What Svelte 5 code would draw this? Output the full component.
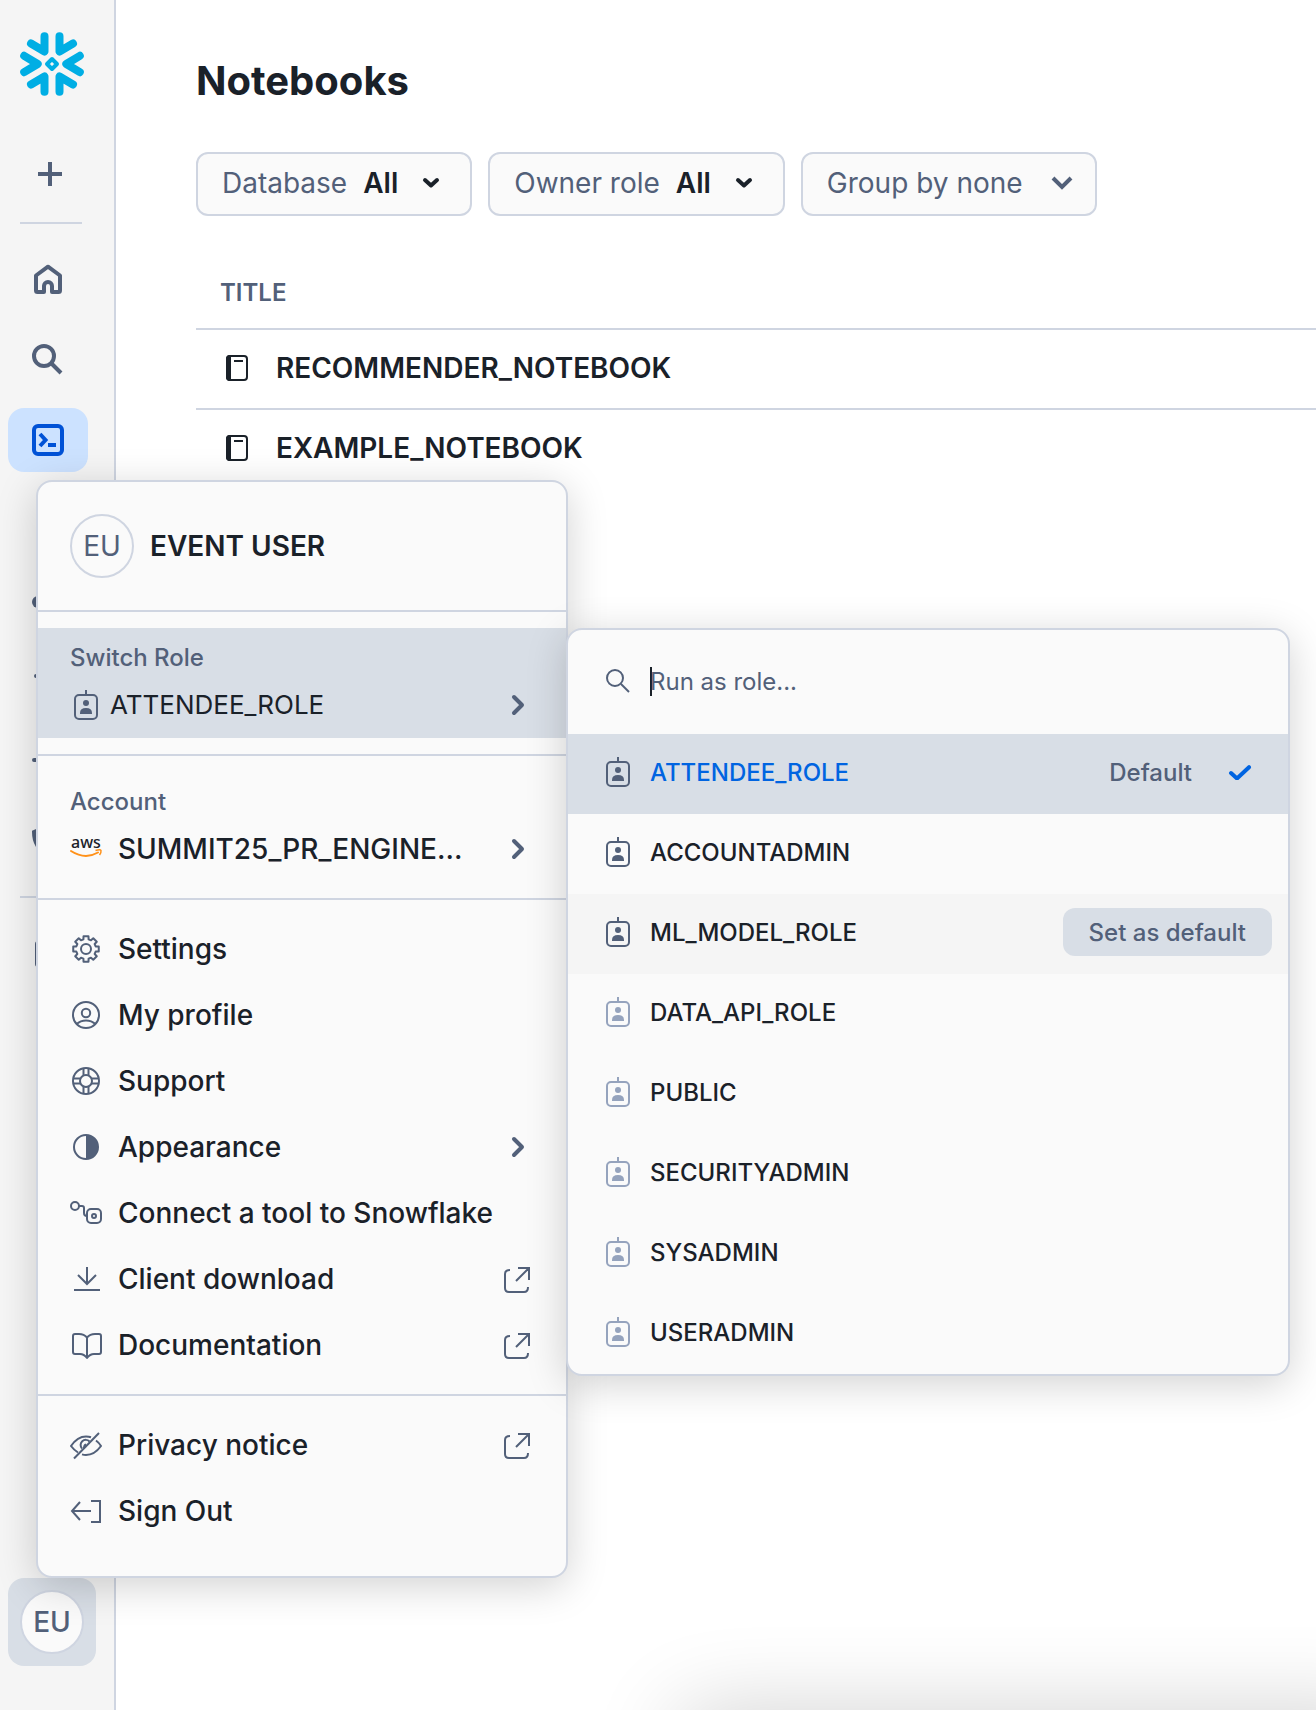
<script>
  const notebooks = ["RECOMMENDER_NOTEBOOK", "EXAMPLE_NOTEBOOK"];

  const roles = [
    { name: "ATTENDEE_ROLE", assigned: true },
    { name: "ACCOUNTADMIN", assigned: true },
    { name: "ML_MODEL_ROLE", assigned: true },
    { name: "DATA_API_ROLE", assigned: false },
    { name: "PUBLIC", assigned: false },
    { name: "SECURITYADMIN", assigned: false },
    { name: "SYSADMIN", assigned: false },
    { name: "USERADMIN", assigned: false },
  ];

  const menuItems = [
    { label: "Settings", icon: "settings" },
    { label: "My profile", icon: "profile" },
    { label: "Support", icon: "support" },
    { label: "Appearance", icon: "appearance", trailing: "chevron" },
    { label: "Connect a tool to Snowflake", icon: "connect" },
    { label: "Client download", icon: "download", trailing: "external" },
    { label: "Documentation", icon: "book", trailing: "external" },
  ];

  const footerItems = [
    { label: "Privacy notice", icon: "privacy", trailing: "external" },
    { label: "Sign Out", icon: "signout" },
  ];

  const navItems = ["home", "search", "projects", "data", "products", "monitoring", "transform", "admin"];

  let currentRole = $state("ATTENDEE_ROLE");
  let defaultRole = $state("ATTENDEE_ROLE");
  let hoveredRole = $state("ML_MODEL_ROLE");
  let query = $state("");
  let grouping = $state("none");

  let visibleRoles = $derived(
    roles.filter((role) => role.name.includes(query.toUpperCase()))
  );

  // eight-tooth gear outline around 16,16
  function gearPath() {
    let points = [];
    for (let i = 0; i < 8; i++) {
      const steps = [[-15, 10], [-11, 13], [11, 13], [15, 10]];
      for (const [offset, radius] of steps) {
        const a = ((i * 45 + offset) * Math.PI) / 180;
        const x = 16 + radius * Math.cos(a);
        const y = 16 + radius * Math.sin(a);
        points.push(x.toFixed(2) + " " + y.toFixed(2));
      }
    }
    return "M" + points.join("L") + "Z";
  }
</script>

{#snippet badge()}
  <svg class="badge" width="24" height="30" viewBox="0 0 24 30" aria-hidden="true">
    <rect x="1" y="5" width="22" height="24" rx="4" fill="none" stroke="currentColor" stroke-width="2" />
    <path d="M12 0v5" stroke="currentColor" stroke-width="2" />
    <circle cx="12" cy="13" r="3" fill="currentColor" />
    <path d="M6 24v-1q0-5 6-5t6 5v1z" fill="currentColor" />
  </svg>
{/snippet}

{#snippet navIcon(name)}
  <svg width="32" height="32" viewBox="0 0 32 32" fill="none" stroke="currentColor" stroke-width="4" aria-hidden="true">
    {#if name === "home"}
      <path d="M4 11.5 16 2.7l12 8.8v15q0 1.5-1.5 1.5H20v-6a4 4 0 0 0-8 0v6H5.5Q4 28 4 26.5z" stroke-linejoin="round" />
    {:else if name === "search"}
      <circle cx="12" cy="12" r="10" />
      <path d="M19 19 29 29" />
    {:else if name === "projects"}
      <rect x="2" y="2" width="28" height="28" rx="4" />
      <path d="m8 10 5.5 6L8 22M16 21h8" />
    {:else if name === "data"}
      <ellipse cx="16" cy="8" rx="9" ry="4" />
      <path d="M7 8v16c0 6 18 6 18 0V8" />
    {:else if name === "products"}
      <circle cx="6" cy="18" r="6" fill="currentColor" stroke="none" />
      <circle cx="24" cy="8" r="4" />
      <path d="m8 16 14-7" />
    {:else if name === "monitoring"}
      <path d="M4 12h5l5-8 6 22 5-14h5" stroke-linecap="round" />
    {:else if name === "transform"}
      <path d="M2 16h8l5-11 5 21 4-10h6" stroke-linecap="round" />
    {:else if name === "admin"}
      <path d="M2 8 16 2l14 6q0 16-14 22Q2 24 2 8z" />
    {:else}
      <rect x="4" y="4" width="24" height="24" rx="2" stroke-width="2" />
    {/if}
  </svg>
{/snippet}

{#snippet menuIcon(name)}
  <svg width="32" height="32" viewBox="0 0 32 32" fill="none" stroke="currentColor" stroke-width="2" aria-hidden="true">
    {#if name === "settings"}
      <path d={gearPath()} stroke-linejoin="round" />
      <circle cx="16" cy="16" r="5" />
    {:else if name === "profile"}
      <circle cx="16" cy="16" r="13" />
      <circle cx="16" cy="14" r="4.2" />
      <path d="M6.5 25q4-3.6 9.5-3.6t9.5 3.6" />
    {:else if name === "support"}
      <circle cx="16" cy="16" r="13" />
      <circle cx="16" cy="16" r="6" />
      <path d="M13.5 3v7.5M18.5 3v7.5M13.5 21.5V29M18.5 21.5V29M3 13.5h7.5M3 18.5h7.5M21.5 13.5H29M21.5 18.5H29" />
    {:else if name === "appearance"}
      <circle cx="16" cy="16" r="12" />
      <path d="M16 4a12 12 0 0 1 0 24z" fill="currentColor" stroke="none" />
    {:else if name === "connect"}
      <circle cx="5" cy="9" r="4" />
      <path d="M9 9h3q2 0 2 2v5q0 3 3 3" />
      <rect x="17" y="12" width="14" height="14" rx="4" />
      <circle cx="24" cy="19" r="2" />
    {:else if name === "download"}
      <path d="M17 4v17M8 12l9 9 9-9M4 27h26" />
    {:else if name === "book"}
      <path d="M17 8.5Q14 5 9 5H5Q3 5 3 7v16q0 2 2 2h5q4 0 7 4 3-4 7-4h5q2 0 2-2V7q0-2-2-2h-4q-5 0-8 3.5V29" stroke-linejoin="round" />
    {:else if name === "privacy"}
      <path d="M21 8.3Q19 7.5 16 7.5 7.5 7.5 1 17q3 4 7 6.5M26 11.5q3 2.2 5 5.5-6.500 9-15 9-2 0-4-.6M19.5 12.5a5 5 0 0 0-7.5 7M16 15.5q-2 .5-2 4" />
      <path d="M4 29.5 29 4" />
    {:else if name === "signout"}
      <path d="M2 16h19M10 7l-8 9 8 9M21 6h9v21h-9" />
    {/if}
  </svg>
{/snippet}

{#snippet trailingIcon(name)}
  {#if name === "chevron"}
    <svg class="trailing" width="32" height="32" viewBox="0 0 32 32" fill="none" aria-hidden="true">
      <path d="m12 8 8 8-8 8" stroke="currentColor" stroke-width="4" stroke-linecap="round" stroke-linejoin="round" />
    </svg>
  {:else if name === "external"}
    <svg class="trailing" width="32" height="32" viewBox="0 0 32 32" fill="none" aria-hidden="true">
      <path d="M8 7q-5 0-5 4v14q0 4 4 4h15q4 0 4-5M16 5h11v12M27 5 14 18" stroke="currentColor" stroke-width="2" />
    </svg>
  {/if}
{/snippet}

{#snippet menuList(items)}
  <ul class="section">
    {#each items as item}
      <li>
        <a class="item" href="#{item.icon}">
          {@render menuIcon(item.icon)}
          <span>{item.label}</span>
          {@render trailingIcon(item.trailing)}
        </a>
      </li>
    {/each}
  </ul>
{/snippet}

<div class="app">
  <aside class="sidebar">
    <a class="logo" href="#top" aria-label="Snowflake">
      <svg width="64" height="64" viewBox="0 0 64 64" fill="none" stroke="#00aee4" stroke-width="8" stroke-linecap="round" stroke-linejoin="round">
        <path d="M11 11.5 24.5 19.500V4.200M53 11.5 39.5 19.500V4.200" />
        <path d="M11 52.5 24.5 44.500v15.300M53 52.5 39.5 44.500v15.300" />
        <path d="m4.200 23.800 13.500 8.200-13.500 8.200M59.800 23.800 46.300 32l13.500 8.200" />
        <path d="m32 27 5 5-5 5-5-5z" stroke-width="4" />
      </svg>
    </a>
    <button class="nav create" aria-label="Create">
      <svg width="24" height="24" viewBox="0 0 24 24" aria-hidden="true">
        <path d="M12 0v24M0 12h24" stroke="currentColor" stroke-width="4" />
      </svg>
    </button>
    <hr />
    <nav>
      {#each navItems as name}
        <a class="nav" class:active={name === "projects"} href="#{name}" aria-label={name}>
          {@render navIcon(name)}
        </a>
      {/each}
    </nav>
    <hr />
    <a class="nav" href="#catalog" aria-label="catalog">{@render navIcon("catalog")}</a>

    <div class="account">
      <button class="user" aria-label="User menu" aria-expanded="true">
        <span class="avatar small">EU</span>
      </button>

      <div class="menu">
        <div class="profile">
          <span class="avatar">EU</span>
          <strong>EVENT USER</strong>
        </div>

        <div class="section switcher">
          <button class="block selected" aria-haspopup="true" aria-expanded="true">
            <span class="label">Switch Role</span>
            <span class="value role">
              <span class="slot">{@render badge()}</span>
              <span>{currentRole}</span>
              {@render trailingIcon("chevron")}
            </span>
          </button>

          <div class="submenu">
            <div class="search">
              <svg width="24" height="24" viewBox="0 0 24 24" fill="none" stroke="currentColor" stroke-width="2" aria-hidden="true">
                <circle cx="9" cy="9" r="8" />
                <path d="M15 15 23 23" />
              </svg>
              <span class="caret"></span>
              <input type="text" placeholder="Run as role..." aria-label="Run as role" bind:value={query} />
            </div>
            <ul>
              {#each visibleRoles as role}
                <li
                  class:current={role.name === currentRole}
                  class:hovered={role.name === hoveredRole}
                  class:dim={!role.assigned}
                  onmouseenter={() => (hoveredRole = role.name)}
                >
                  <button class="pick" onclick={() => (currentRole = role.name)}>
                    {@render badge()}
                    <span>{role.name}</span>
                  </button>
                  {#if role.name === defaultRole}
                    <span class="default">Default</span>
                  {:else if role.name === hoveredRole}
                    <button class="set" onclick={() => (defaultRole = role.name)}>Set as default</button>
                  {/if}
                  {#if role.name === currentRole}
                    <svg class="check" width="24" height="16" viewBox="0 0 24 16" fill="none" aria-hidden="true">
                      <path d="m3 9 6 5.500L21 3.200" stroke="#0064e1" stroke-width="4" stroke-linecap="round" />
                    </svg>
                  {/if}
                </li>
              {/each}
            </ul>
          </div>
        </div>

        <div class="section">
          <button class="block" aria-haspopup="true">
            <span class="label">Account</span>
            <span class="value">
              <svg class="cloud" width="32" height="32" viewBox="0 0 32 32" aria-hidden="true">
                <text x="1" y="15" class="aws">aws</text>
                <path d="M1 18q14 9 27 1.500" fill="none" stroke="#ff9119" stroke-width="2" stroke-linecap="round" />
                <path d="M25.500 17.500q5-1.500 5.500 0 .400 2-1.500 4.500" fill="none" stroke="#ff9119" stroke-width="1.500" />
              </svg>
              <span>SUMMIT25_PR_ENGINE...</span>
              {@render trailingIcon("chevron")}
            </span>
          </button>
        </div>

        {@render menuList(menuItems)}
        {@render menuList(footerItems)}
      </div>
    </div>
  </aside>

  <main>
    <h1>Notebooks</h1>
    <div class="filters">
      <button class="filter">
        Database <b>All</b>
        <svg width="18" height="12" viewBox="0 0 18 12" fill="none" aria-hidden="true">
          <path d="m3 3 6 5.500L15 3" stroke="currentColor" stroke-width="4" stroke-linecap="round" stroke-linejoin="round" />
        </svg>
      </button>
      <button class="filter">
        Owner role <b>All</b>
        <svg width="18" height="12" viewBox="0 0 18 12" fill="none" aria-hidden="true">
          <path d="m3 3 6 5.500L15 3" stroke="currentColor" stroke-width="4" stroke-linecap="round" stroke-linejoin="round" />
        </svg>
      </button>
      <div class="group">
        <select class="filter" aria-label="Grouping" bind:value={grouping}>
          <option value="none">Group by none</option>
          <option value="role">Group by role</option>
        </select>
        <svg width="22" height="16" viewBox="0 0 22 16" fill="none" aria-hidden="true">
          <path d="m2 3 9 9 9-9" stroke="currentColor" stroke-width="4" />
        </svg>
      </div>
    </div>

    <table>
      <thead>
        <tr><th scope="col">TITLE</th></tr>
      </thead>
      <tbody>
        {#each notebooks as notebook}
          <tr>
            <td>
              <a href="#{notebook}">
                <svg width="22" height="26" viewBox="0 0 22 26" aria-hidden="true">
                  <rect x="1" y="1" width="20" height="24" rx="3" fill="none" stroke="currentColor" stroke-width="2" />
                  <path d="M5 0v26H4Q0 26 0 22V4Q0 0 4 0zM8 5h9v2H8z" fill="currentColor" />
                </svg>
                {notebook}
              </a>
            </td>
          </tr>
        {/each}
      </tbody>
    </table>
    <div class="glow"></div>
  </main>
</div>

<style>
  :global(body) {
    margin: 0;
    background: #fff;
  }

  .app {
    --ink: #1a2129;
    --muted: #526079;
    --line: #cfd5e1;
    --panel: #fafafa;
    --select: #d8dee6;
    display: flex;
    min-height: 100vh;
    font-family: Inter, "Liberation Sans", sans-serif;
    font-size: 28px;
    color: var(--ink);
  }

  .app * {
    box-sizing: border-box;
  }

  button,
  input,
  select {
    font: inherit;
    color: inherit;
    background: none;
    border: 0;
    padding: 0;
    margin: 0;
    text-align: left;
    cursor: pointer;
  }

  a {
    color: inherit;
    text-decoration: none;
  }

  ul {
    list-style: none;
    margin: 0;
    padding: 0;
  }

  svg {
    flex: none;
    display: block;
  }

  .sidebar {
    display: flex;
    flex-direction: column;
    flex: none;
    width: 116px;
    padding: 32px 0 44px 8px;
    border-right: 2px solid var(--line);
    background: #f5f5f5;
    color: var(--muted);
    position: relative;
    z-index: 1;
  }

  .logo {
    margin: 0 0 46px 12px;
  }

  .nav {
    display: flex;
    align-items: center;
    justify-content: center;
    width: 80px;
    height: 64px;
    border-radius: 16px;
  }

  .create {
    width: 84px;
    margin-bottom: -8px;
  }

  .nav.active {
    background: #cce2ff;
    color: #0052d6;
  }

  nav {
    display: flex;
    flex-direction: column;
    gap: 16px;
  }

  hr {
    width: 62px;
    height: 2px;
    margin: 24px 0 24px 12px;
    border: 0;
    background: var(--line);
  }

  .account {
    position: relative;
    margin-top: auto;
  }

  .user {
    display: flex;
    align-items: center;
    justify-content: center;
    width: 88px;
    height: 88px;
    border-radius: 16px;
    background: var(--select);
  }

  .avatar {
    display: flex;
    align-items: center;
    justify-content: center;
    width: 64px;
    height: 64px;
    border: 2px solid var(--line);
    border-radius: 50%;
    background: var(--panel);
    color: var(--muted);
  }

  .avatar.small {
    font-weight: 500;
  }

  .menu {
    position: absolute;
    left: 28px;
    bottom: 100%;
    width: 532px;
    padding-bottom: 16px;
    border: 2px solid var(--line);
    border-radius: 16px;
    background: var(--panel);
    color: var(--ink);
    box-shadow: 0 8px 40px rgba(0, 0, 0, 0.18);
  }

  .profile {
    display: flex;
    align-items: center;
    gap: 16px;
    padding: 32px;
  }

  .profile strong {
    font-weight: 600;
  }

  .section {
    padding: 16px 0;
    border-top: 2px solid var(--line);
  }

  .switcher {
    position: relative;
  }

  .block {
    display: flex;
    flex-direction: column;
    gap: 16px;
    width: 100%;
    padding: 16px 32px;
  }

  .selected {
    background: var(--select);
  }

  .label {
    font-size: 24px;
    line-height: 28px;
    font-weight: 500;
    color: var(--muted);
  }

  .value,
  .item {
    display: flex;
    align-items: center;
    gap: 16px;
    width: 100%;
    font-weight: 500;
  }

  .value {
    line-height: 34px;
  }

  .role {
    gap: 8px;
    font-size: 26px;
    font-weight: 400;
  }

  .slot {
    display: flex;
    justify-content: center;
    width: 32px;
  }

  .item {
    height: 66px;
    padding: 0 32px;
  }

  .item > svg,
  .trailing,
  .badge {
    color: var(--muted);
  }

  .trailing {
    margin-left: auto;
  }

  .cloud {
    overflow: visible;
  }

  .aws {
    font: 500 16px "Noto Sans", sans-serif;
    fill: var(--ink);
  }

  .submenu {
    position: absolute;
    top: 16px;
    left: 100%;
    width: 724px;
    border: 2px solid var(--line);
    border-radius: 16px;
    background: var(--panel);
    box-shadow: 0 8px 40px rgba(0, 0, 0, 0.18);
    font-size: 24px;
    overflow: hidden;
  }

  .search {
    display: flex;
    align-items: center;
    height: 104px;
    padding: 0 38px 2px;
    color: var(--muted);
  }

  .caret {
    width: 2px;
    height: 29px;
    margin: 0 -2px 0 20px;
    background: var(--ink);
  }

  .search input {
    flex: 1;
    outline: none;
  }

  .search input::placeholder {
    color: var(--muted);
    opacity: 1;
  }

  .submenu li {
    display: flex;
    align-items: center;
    height: 80px;
    padding: 0 16px 4px 0;
    font-weight: 500;
  }

  .pick {
    display: flex;
    align-items: center;
    gap: 20px;
    flex: 1;
    height: 100%;
    padding-left: 38px;
  }

  .current {
    background: var(--select);
  }

  .current .pick span {
    color: #0064e1;
  }

  .hovered {
    background: #f5f5f5;
  }

  .dim .badge {
    color: #95a3bd;
  }

  .default {
    color: var(--muted);
  }

  .check {
    margin: 0 20px 0 36px;
  }

  .set {
    height: 48px;
    padding: 0 26px;
    border-radius: 12px;
    background: var(--select);
    color: var(--muted);
  }

  main {
    position: relative;
    flex: 1;
    min-width: 0;
    padding: 57px 0 0 80px;
    overflow: hidden;
  }

  h1 {
    margin: 0 0 47px;
    font-size: 40px;
    line-height: 48px;
    font-weight: 700;
  }

  .filters {
    display: flex;
    gap: 16px;
    margin-bottom: 40px;
  }

  .filter {
    display: flex;
    align-items: center;
    gap: 16px;
    height: 64px;
    padding: 0 30px 2px 24px;
    border: 2px solid var(--line);
    border-radius: 12px;
    background: var(--panel);
    color: var(--muted);
  }

  .filter b {
    font-weight: 600;
    color: var(--ink);
  }

  .filter svg {
    margin-left: 8px;
    color: var(--ink);
  }

  .group {
    position: relative;
    color: var(--muted);
  }

  .group select {
    appearance: none;
    padding-right: 72px;
  }

  .group svg {
    position: absolute;
    right: 24px;
    top: 23px;
    pointer-events: none;
  }

  table {
    width: 100%;
    border-spacing: 0;
  }

  th {
    height: 72px;
    padding: 0 24px;
    font-size: 24px;
    font-weight: 600;
    text-align: left;
    color: var(--muted);
  }

  td {
    height: 80px;
    padding: 0 30px 2px;
    border-top: 2px solid var(--line);
    font-weight: 600;
  }

  td a {
    display: flex;
    align-items: center;
    gap: 28px;
  }

  /* edge of the floating panel parked under the fold */
  .glow {
    position: absolute;
    left: 564px;
    right: -80px;
    bottom: -84px;
    height: 80px;
    border-radius: 16px;
    box-shadow: 0 0 90px rgba(0, 0, 0, 0.2);
  }
</style>
